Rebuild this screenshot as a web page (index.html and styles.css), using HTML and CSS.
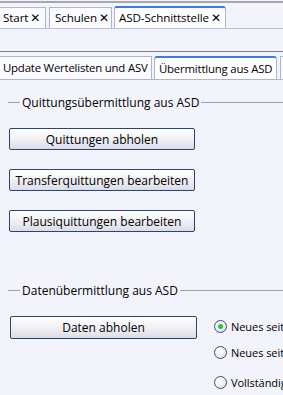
FILE: index.html
```html
<!DOCTYPE html>
<html>
<head>
<meta charset="utf-8">
<link rel="stylesheet" href="styles.css">
</head>
<body>
<div class="page">
  <div class="topline"></div>
  <div class="tabbar main-tabs">
    <div class="tab first t-start">Start<span class="x">✕</span></div>
    <div class="tab t-schulen">Schulen<span class="x">✕</span></div>
    <div class="tab active t-asd">ASD-Schnittstelle<span class="x">✕</span></div>
  </div>
  <div class="spacer"></div>
  <div class="tabbar sub-tabs">
    <div class="tab first">Update Wertelisten und ASV</div>
    <div class="tab active">Übermittlung aus ASD</div>
    <div class="tab last">Ü</div>
  </div>
  <div class="content">
    <div class="group">
      <div class="legend"><span class="dash"></span><span class="label">Quittungsübermittlung aus ASD</span><span class="rule"></span></div>
      <div class="buttons">
        <button class="btn">Quittungen abholen</button>
        <button class="btn">Transferquittungen bearbeiten</button>
        <button class="btn">Plausiquittungen bearbeiten</button>
      </div>
    </div>
    <div class="group group2">
      <div class="legend"><span class="dash"></span><span class="label">Datenübermittlung aus ASD</span><span class="rule"></span></div>
      <div class="row">
        <button class="btn btn-wide">Daten abholen</button>
        <div class="radios">
          <label class="radio"><span class="circle checked"></span>Neues seit</label>
          <label class="radio r2"><span class="circle"></span>Neues seit</label>
          <label class="radio r3"><span class="circle"></span>Vollständig</label>
        </div>
      </div>
    </div>
  </div>
</div>
</body>
</html>
```
FILE: styles.css
```css
html, body {
  margin: 0;
  padding: 0;
  background: #f3f3fb;
  overflow: hidden;
}
.page {
  width: 283px;
  height: 395px;
  overflow: hidden;
  font-family: "Open Sans", "DejaVu Sans", sans-serif;
  font-size: 12px;
  color: #000;
}
.topline {
  margin-top: 1px;
  height: 2px;
  background: #a7a7ad;
}
.tabbar {
  display: flex;
  align-items: flex-end;
  gap: 2px;
  white-space: nowrap;
}
.main-tabs {
  height: 25px;
  border-bottom: 1px solid #b2bfd6;
}
.tab {
  box-sizing: border-box;
  height: 21px;
  padding: 0 3px 0 5px;
  border: 1px solid #a9b6cc;
  border-bottom: none;
  background: #fbfbff;
  display: flex;
  align-items: center;
  line-height: 1;
  flex-shrink: 0;
  overflow: hidden;
}
.main-tabs .tab {
  font-size: 11.6px;
  letter-spacing: -0.1px;
}
.tab.first {
  border-left: none;
  padding-left: 3px;
}
.t-start { width: 46px; }
.t-schulen { width: 63px; margin-left: 1px; }
.t-asd { width: 112px; padding-left: 4px; }
.tab.active {
  height: 22px;
  background: #ffffff;
  border-top: 2px solid #3d7ce0;
  border-radius: 3px 3px 0 0;
  padding-top: 0;
}
.x {
  font-weight: bold;
  font-size: 12px;
  margin-left: 2px;
  letter-spacing: 0;
  font-family: "DejaVu Sans", sans-serif;
}
.spacer {
  height: 22px;
  border-bottom: 1px solid #7c7c84;
}
.sub-tabs {
  height: 27px;
  border-bottom: 1px solid #a9b6cc;
}
.sub-tabs .tab {
  height: 23px;
  padding: 0 4px;
  font-size: 11.4px;
  letter-spacing: -0.2px;
}
.sub-tabs .tab.first {
  padding-left: 3px;
  width: 152px;
}
.sub-tabs .tab.active {
  height: 23px;
  width: 123px;
}
.sub-tabs .tab.last {
  margin-left: 1px;
}
.content {
  padding: 14px 0 0 8px;
}
.legend {
  display: flex;
  align-items: center;
  height: 16px;
}
.dash {
  width: 12px;
  height: 1px;
  background: #a0a0a8;
}
.label {
  padding: 0 2px 0 2px;
}
.rule {
  flex: 1;
  height: 1px;
  background: #a0a0a8;
}
.buttons {
  display: flex;
  flex-direction: column;
  gap: 19px;
  padding: 18px 0 0 1px;
}
.btn {
  box-sizing: border-box;
  width: 186px;
  height: 22px;
  border: 1px solid #2c4470;
  border-radius: 2px;
  background: linear-gradient(to bottom, #ffffff 0%, #f2f2f6 45%, #dcdce6 100%);
  font-family: inherit;
  font-size: 12px;
  color: #000;
  padding: 0;
  margin: 0;
  flex-shrink: 0;
}
.group2 {
  padding-top: 50px;
}
.row {
  display: flex;
  align-items: flex-start;
  padding: 18px 0 0 2px;
}
.btn-wide {
  width: 187px;
  height: 23px;
}
.radios {
  display: flex;
  flex-direction: column;
  flex-shrink: 0;
  min-width: max-content;
  margin-left: 17px;
  padding-top: 2px;
  font-size: 11px;
  letter-spacing: -0.05px;
}
.radio {
  display: flex;
  align-items: center;
  height: 16px;
  white-space: nowrap;
}
.r2 { margin-top: 10px; }
.r3 { margin-top: 14px; }
.circle {
  box-sizing: border-box;
  width: 13px;
  height: 13px;
  border-radius: 50%;
  border: 1px solid #3a4e76;
  background: radial-gradient(circle at 40% 35%, #ffffff 0%, #eef0f6 55%, #c9cfdc 100%);
  margin-right: 4px;
  display: flex;
  align-items: center;
  justify-content: center;
  flex-shrink: 0;
}
.circle.checked::after {
  content: "";
  width: 5px;
  height: 5px;
  border-radius: 50%;
  background: #2fbf3a;
}
```
